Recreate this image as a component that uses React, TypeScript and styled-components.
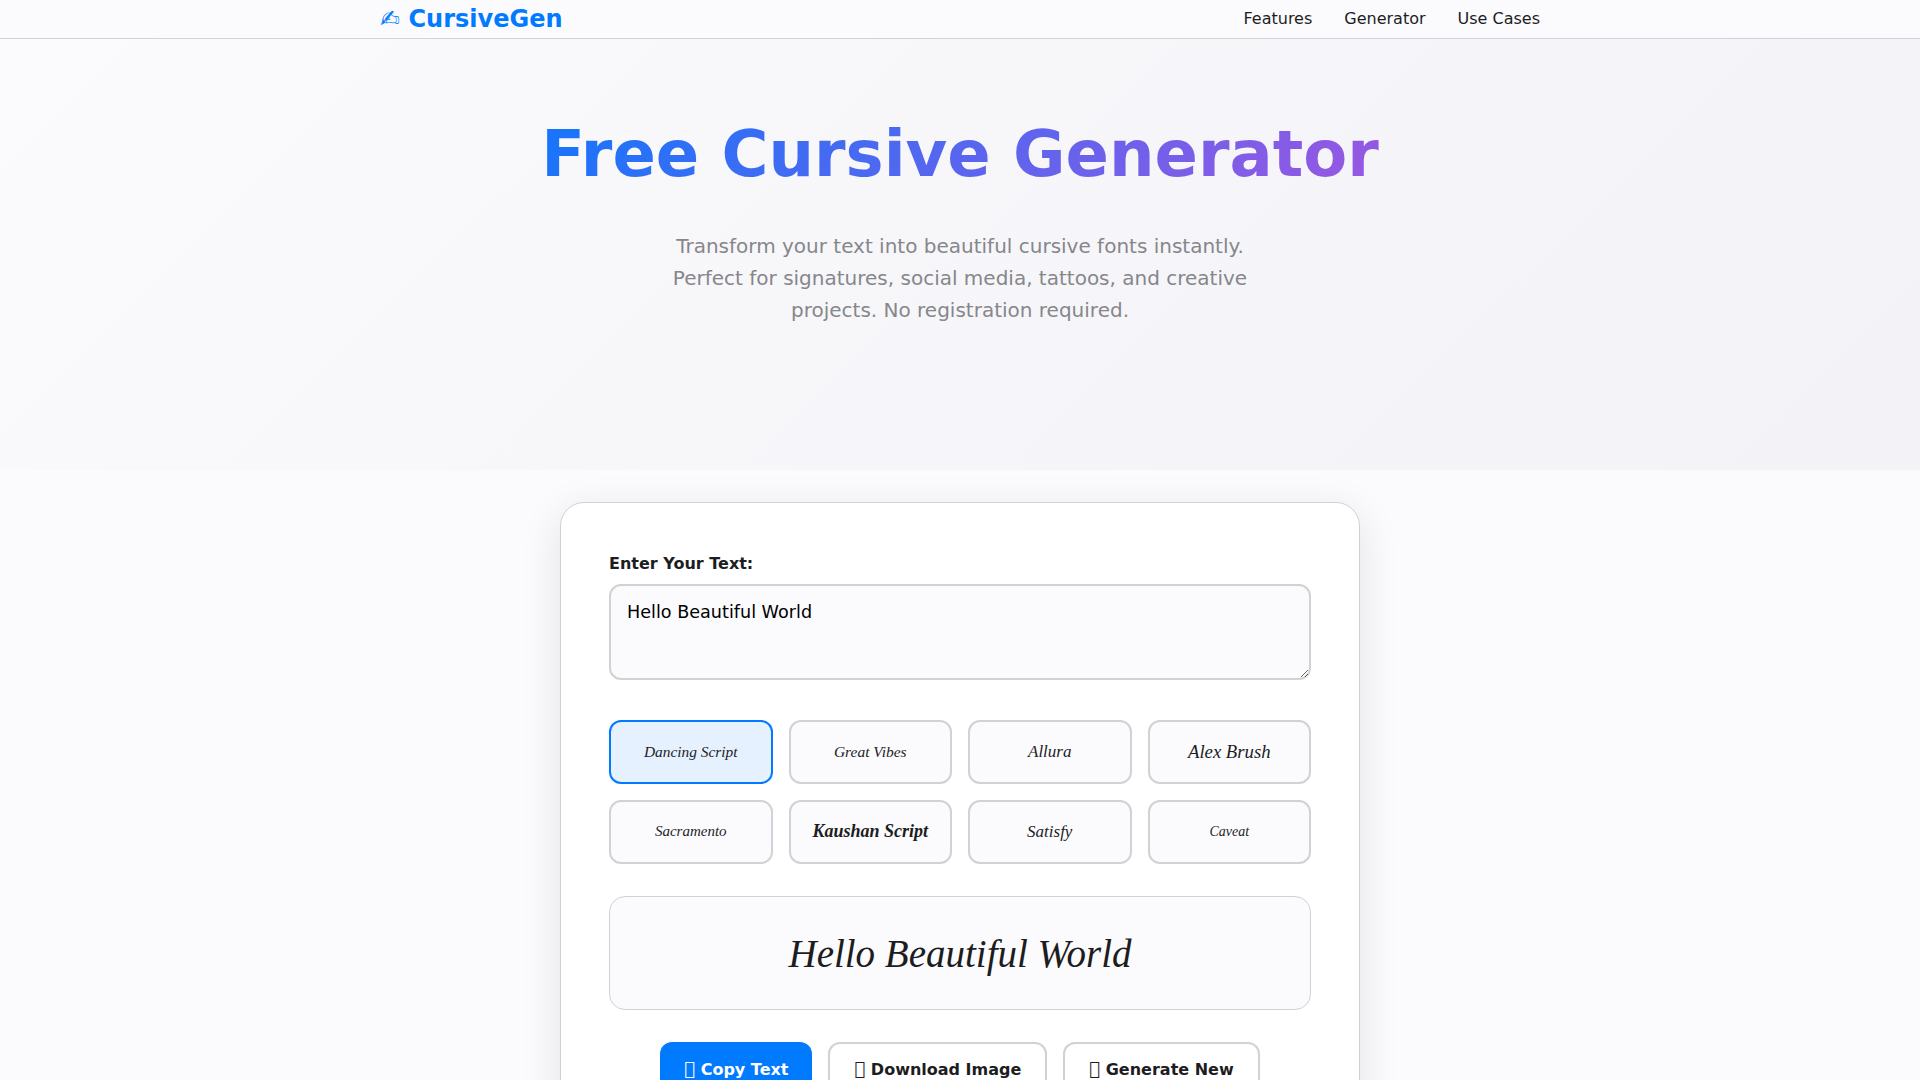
import { useState } from "react";
import styled, { createGlobalStyle } from "styled-components";

const GlobalStyle = createGlobalStyle`
  * {
    box-sizing: border-box;
  }
  html, body {
    margin: 0;
    padding: 0;
  }
  body {
    background: #fbfbfd;
    color: #1d1d1f;
    font-family: "DejaVu Sans", sans-serif;
    line-height: 1.6;
  }
`;

const Nav = styled.nav`
  height: 39px;
  background: #fbfbfd;
  border-bottom: 1px solid #d1d1d6;
`;

const NavInner = styled.div`
  width: 1200px;
  height: 38px;
  margin: 0 auto;
  padding: 0 20px;
  display: flex;
  align-items: center;
  justify-content: space-between;
`;

const Logo = styled.div`
  font-size: 24px;
  font-weight: 700;
  color: #007aff;
`;

const NavLinks = styled.div`
  display: flex;
  gap: 32px;
`;

const NavLink = styled.a`
  font-size: 16px;
  color: #1d1d1f;
`;

const Hero = styled.section`
  height: 431px;
  padding-top: 64px;
  background: linear-gradient(135deg, #fbfbfd 0%, #f2f2f7 100%);
  text-align: center;
`;

const Title = styled.h1`
  width: 1100px;
  margin: 0 auto 25px;
  font-size: 64px;
  font-weight: 700;
  line-height: 1.6;
  background: linear-gradient(135deg, #007aff, #af52de);
  -webkit-background-clip: text;
  background-clip: text;
  color: transparent;
`;

const Subtitle = styled.p`
  width: 600px;
  margin: 0 auto;
  font-size: 20px;
  color: #86868b;
`;

const Main = styled.main`
  padding: 32px 0 64px;
`;

const Card = styled.div`
  width: 800px;
  margin: 0 auto;
  padding: 48px;
  background: #fff;
  border: 1px solid #d1d1d6;
  border-radius: 24px;
  box-shadow: 0 10px 40px rgba(0, 0, 0, 0.1);
`;

const Label = styled.label`
  display: block;
  margin-bottom: 7px;
  font-size: 16px;
  font-weight: 700;
`;

const TextArea = styled.textarea`
  display: block;
  width: 100%;
  height: 96px;
  margin-bottom: 40px;
  padding: 16px;
  font-family: "DejaVu Sans", sans-serif;
  font-size: 17.6px;
  line-height: 1.2;
  color: #000;
  background: #fbfbfd;
  border: 2px solid #d1d1d6;
  border-radius: 12px;
  outline: none;
  resize: vertical;
`;

const FontGrid = styled.div`
  display: grid;
  grid-template-columns: repeat(4, 1fr);
  gap: 16px;
  margin-bottom: 32px;
`;

const FontButton = styled.button<{ $active?: boolean; $size: number; $bold?: boolean }>`
  height: 64px;
  padding: 0;
  display: flex;
  align-items: center;
  justify-content: center;
  background: ${(p) => (p.$active ? "rgba(0, 122, 255, 0.1)" : "#fbfbfd")};
  border: 2px solid ${(p) => (p.$active ? "#007aff" : "#d1d1d6")};
  border-radius: 12px;
  color: #1d1d1f;
  font-family: "Liberation Serif", serif;
  font-style: italic;
  font-weight: ${(p) => (p.$bold ? 700 : 400)};
  font-size: ${(p) => p.$size}px;
`;

const Preview = styled.div`
  height: 114px;
  margin-bottom: 32px;
  padding-top: 3px;
  display: flex;
  align-items: center;
  justify-content: center;
  background: #fbfbfd;
  border: 1px solid #d1d1d6;
  border-radius: 16px;
  font-family: "Liberation Serif", serif;
  font-style: italic;
  font-size: 39px;
`;

const Actions = styled.div`
  display: flex;
  justify-content: center;
  gap: 16px;
`;

const ActionButton = styled.button<{ $primary?: boolean }>`
  padding: 16px 24px;
  font-family: "DejaVu Sans", sans-serif;
  font-size: 16px;
  font-weight: 700;
  color: ${(p) => (p.$primary ? "#fff" : "#1d1d1f")};
  background: ${(p) => (p.$primary ? "#007aff" : "#fff")};
  border: ${(p) => (p.$primary ? "0" : "2px solid #d1d1d6")};
  border-radius: 12px;
`;

const ButtonGlyph = styled.span`
  font-size: 18px;
  line-height: 0;
`;

const fonts = [
  { name: "Dancing Script", size: 15.4 },
  { name: "Great Vibes", size: 15.5 },
  { name: "Allura", size: 17 },
  { name: "Alex Brush", size: 18.7 },
  { name: "Sacramento", size: 15 },
  { name: "Kaushan Script", size: 18, bold: true },
  { name: "Satisfy", size: 17 },
  { name: "Caveat", size: 14 },
];

export default function App() {
  const [text, setText] = useState("Hello Beautiful World");
  const [active, setActive] = useState("Dancing Script");

  return (
    <>
      <GlobalStyle />
      <Nav>
        <NavInner>
          <Logo>✍ CursiveGen</Logo>
          <NavLinks>
            <NavLink>Features</NavLink>
            <NavLink>Generator</NavLink>
            <NavLink>Use Cases</NavLink>
          </NavLinks>
        </NavInner>
      </Nav>
      <Hero>
        <Title>Free Cursive Generator</Title>
        <Subtitle>
          Transform your text into beautiful cursive fonts instantly. Perfect for signatures, social
          media, tattoos, and creative projects. No registration required.
        </Subtitle>
      </Hero>
      <Main>
        <Card>
          <Label>Enter Your Text:</Label>
          <TextArea value={text} onChange={(e) => setText(e.target.value)} />
          <FontGrid>
            {fonts.map((f) => (
              <FontButton
                key={f.name}
                $active={f.name === active}
                $size={f.size}
                $bold={f.bold}
                onClick={() => setActive(f.name)}
              >
                {f.name}
              </FontButton>
            ))}
          </FontGrid>
          <Preview>{text}</Preview>
          <Actions>
            <ActionButton $primary>
              <ButtonGlyph>{"\uE000"}</ButtonGlyph> Copy Text
            </ActionButton>
            <ActionButton>
              <ButtonGlyph>{"\uE000"}</ButtonGlyph> Download Image
            </ActionButton>
            <ActionButton>
              <ButtonGlyph>{"\uE000"}</ButtonGlyph> Generate New
            </ActionButton>
          </Actions>
        </Card>
      </Main>
    </>
  );
}
